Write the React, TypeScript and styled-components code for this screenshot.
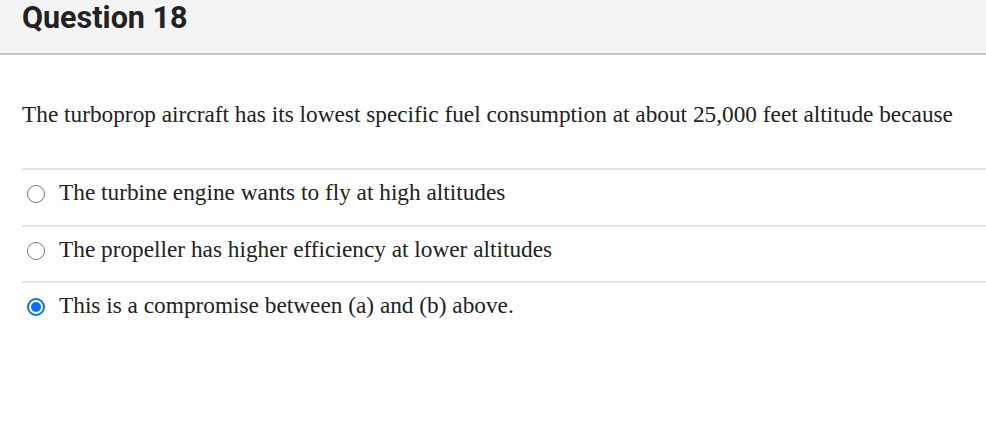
import React from "react";
import styled, { createGlobalStyle } from "styled-components";

const Global = createGlobalStyle`
  html, body { margin: 0; padding: 0; background: #ffffff; }
  #root { width: 986px; height: 427px; overflow: hidden; }
`;

const Page = styled.div`
  display: flex;
  flex-direction: column;
  width: 986px;
`;

const Header = styled.header`
  height: 53px;
  background: #f4f4f4;
  border-bottom: 2px solid #c6c6c6;
  display: flex;
  align-items: flex-start;
  padding: 0 22px;
  box-sizing: content-box;
`;

const Title = styled.h1`
  margin: 0;
  font-family: Roboto, "Liberation Sans", sans-serif;
  font-weight: 700;
  font-size: 30.5px;
  line-height: 36px;
  color: #222222;
`;

const Body = styled.main`
  padding: 45px 0 0 22px;
  display: flex;
  flex-direction: column;
`;

const QuestionText = styled.p`
  margin: 0 0 40px 0;
  font-family: "Liberation Serif", "Times New Roman", serif;
  font-size: 23.3px;
  line-height: 28px;
  color: #222222;
`;

const Options = styled.ul`
  list-style: none;
  margin: 0;
  padding: 0;
`;

const Option = styled.li`
  border-top: 2px solid #e3e3e3;
  height: 56.5px;
  box-sizing: border-box;
  display: flex;
  align-items: flex-start;
  padding: 8px 0 0 5px;
  gap: 14px;
  font-family: "Liberation Serif", "Times New Roman", serif;
  font-size: 23.3px;
  line-height: 28px;
  color: #222222;
`;

const Radio = styled.span<{ $checked?: boolean }>`
  width: 18px;
  height: 18px;
  margin-top: 7px;
  border-radius: 50%;
  box-sizing: border-box;
  flex: none;
  border: ${(p) => (p.$checked ? "2px solid #0a6cff" : "1.7px solid #7a7a7a")};
  background: #ffffff;
  display: flex;
  align-items: center;
  justify-content: center;
  &::after {
    content: "";
    display: ${(p) => (p.$checked ? "block" : "none")};
    width: 10px;
    height: 10px;
    border-radius: 50%;
    background: #0a6cff;
  }
`;

const options = [
  { text: "The turbine engine wants to fly at high altitudes", checked: false },
  { text: "The propeller has higher efficiency at lower altitudes", checked: false },
  { text: "This is a compromise between (a) and (b) above.", checked: true },
];

export default function App() {
  return (
    <Page>
      <Global />
      <Header>
        <Title>Question 18</Title>
      </Header>
      <Body>
        <QuestionText>
          The turboprop aircraft has its lowest specific fuel consumption at about 25,000 feet altitude because
        </QuestionText>
        <Options>
          {options.map((o) => (
            <Option key={o.text}>
              <Radio $checked={o.checked} />
              <span>{o.text}</span>
            </Option>
          ))}
        </Options>
      </Body>
    </Page>
  );
}
